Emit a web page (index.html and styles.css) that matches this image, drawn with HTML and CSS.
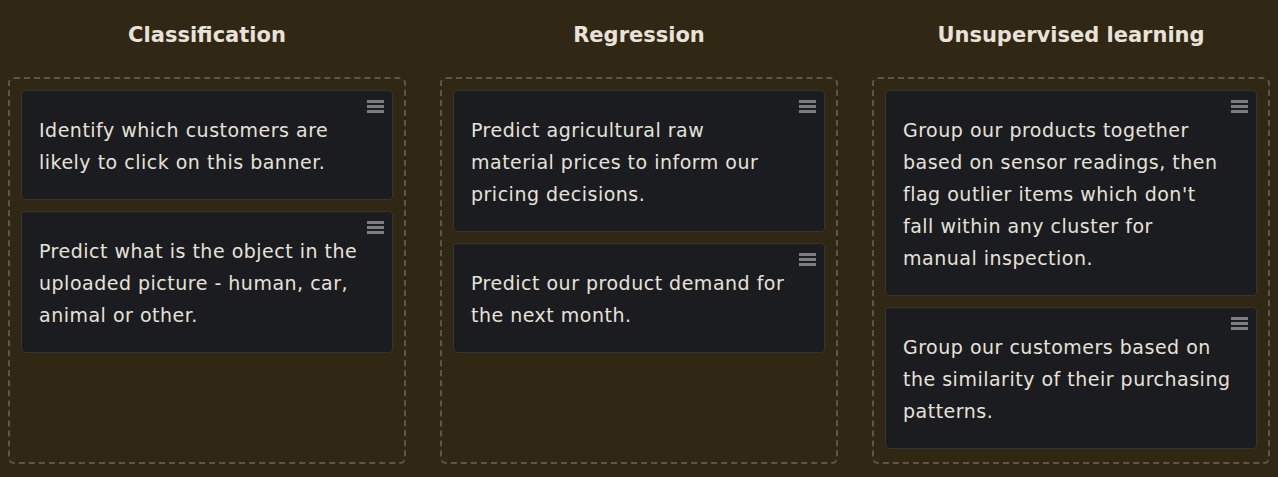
FILE: index.html
```html
<!DOCTYPE html>
<html>
<head>
<meta charset="utf-8">
<link rel="stylesheet" href="styles.css">
</head>
<body>
<div class="board">
  <section class="col">
    <h2 class="col-title">Classification</h2>
    <div class="zone">
      <div class="card"><span class="grip"><i></i><i></i><i></i></span><p>Identify which customers are likely to click on this banner.</p></div>
      <div class="card"><span class="grip"><i></i><i></i><i></i></span><p>Predict what is the object in the uploaded picture - human, car, animal or other.</p></div>
    </div>
  </section>
  <section class="col">
    <h2 class="col-title">Regression</h2>
    <div class="zone">
      <div class="card"><span class="grip"><i></i><i></i><i></i></span><p>Predict agricultural raw<br>material prices to inform our pricing decisions.</p></div>
      <div class="card"><span class="grip"><i></i><i></i><i></i></span><p>Predict our product demand for the next month.</p></div>
    </div>
  </section>
  <section class="col">
    <h2 class="col-title">Unsupervised learning</h2>
    <div class="zone">
      <div class="card"><span class="grip"><i></i><i></i><i></i></span><p>Group our products together based on sensor readings, then flag outlier items which don't<br>fall within any cluster for<br>manual inspection.</p></div>
      <div class="card"><span class="grip"><i></i><i></i><i></i></span><p>Group our customers based on the similarity of their purchasing patterns.</p></div>
    </div>
  </section>
</div>
</body>
</html>
```
FILE: styles.css
```css
html, body {
  margin: 0;
  padding: 0;
  background: #302814;
}
body {
  padding: 0 8px;
  font-family: "DejaVu Sans", "Noto Sans", sans-serif;
  color: #e6e2da;
}
.board {
  display: grid;
  grid-template-columns: repeat(3, 1fr);
  column-gap: 34px;
  height: 477px;
}
.col {
  display: flex;
  flex-direction: column;
  padding-bottom: 13px;
}
.col-title {
  margin: 0;
  height: 77px;
  box-sizing: border-box;
  padding-top: 20px;
  text-align: center;
  font-size: 21px;
  line-height: 30px;
  font-weight: 700;
  color: #e8e2d8;
}
.zone {
  flex: 1;
  border: 2px dashed #5e5742;
  border-radius: 6px;
  padding: 11px;
  display: flex;
  flex-direction: column;
  gap: 11px;
}
.card {
  position: relative;
  background: #1b1c1f;
  border: 1px solid #35352f;
  border-radius: 4px;
  padding: 23px 22px 21px 17px;
}
.card p {
  margin: 0;
  font-size: 19px;
  letter-spacing: 0.5px;
  line-height: 32px;
  color: #e6e2da;
}
.grip {
  position: absolute;
  top: 9px;
  right: 8px;
  width: 17px;
  display: flex;
  flex-direction: column;
  gap: 2px;
}
.grip i {
  display: block;
  height: 3px;
  background: #7d7d7d;
}
```
